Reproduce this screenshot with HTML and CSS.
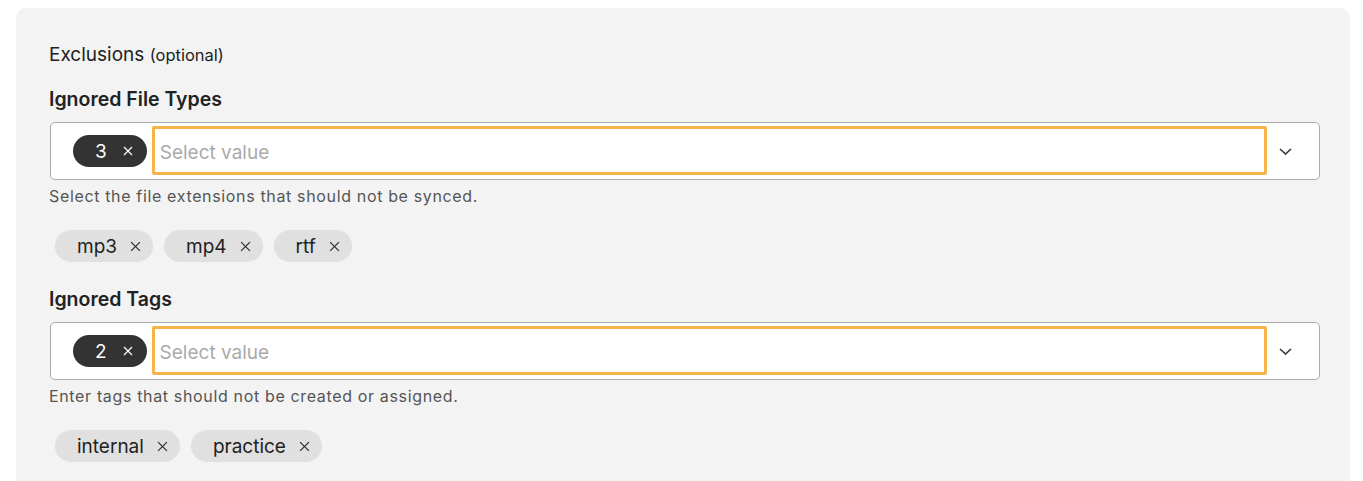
FILE: index.html
```html
<!DOCTYPE html>
<html lang="en">
<head>
<meta charset="utf-8">
<title>Exclusions</title>
<link rel="stylesheet" href="styles.css">
</head>
<body>
<section class="panel">
  <h2 class="title">Exclusions <span class="optional">(optional)</span></h2>

  <div class="field">
    <label class="field-label">Ignored File Types</label>
    <div class="select">
      <div class="select-values">
        <span class="count-chip">3 <svg class="x" viewBox="0 0 10 10"><path d="M1 1L9 9M9 1L1 9"/></svg></span>
        <input class="select-input" type="text" placeholder="Select value">
      </div>
      <span class="select-toggle"><svg class="chevron" viewBox="0 0 13 7"><path d="M1 1L6.5 6L12 1"/></svg></span>
    </div>
    <p class="help">Select the file extensions that should not be synced.</p>
    <div class="chips">
      <span class="chip">mp3 <svg class="x" viewBox="0 0 10 10"><path d="M1 1L9 9M9 1L1 9"/></svg></span>
      <span class="chip">mp4 <svg class="x" viewBox="0 0 10 10"><path d="M1 1L9 9M9 1L1 9"/></svg></span>
      <span class="chip">rtf <svg class="x" viewBox="0 0 10 10"><path d="M1 1L9 9M9 1L1 9"/></svg></span>
    </div>
  </div>

  <div class="field">
    <label class="field-label">Ignored Tags</label>
    <div class="select">
      <div class="select-values">
        <span class="count-chip">2 <svg class="x" viewBox="0 0 10 10"><path d="M1 1L9 9M9 1L1 9"/></svg></span>
        <input class="select-input" type="text" placeholder="Select value">
      </div>
      <span class="select-toggle"><svg class="chevron" viewBox="0 0 13 7"><path d="M1 1L6.5 6L12 1"/></svg></span>
    </div>
    <p class="help">Enter tags that should not be created or assigned.</p>
    <div class="chips">
      <span class="chip">internal <svg class="x" viewBox="0 0 10 10"><path d="M1 1L9 9M9 1L1 9"/></svg></span>
      <span class="chip">practice <svg class="x" viewBox="0 0 10 10"><path d="M1 1L9 9M9 1L1 9"/></svg></span>
    </div>
  </div>
</section>
</body>
</html>
```

FILE: styles.css
```css
* { box-sizing: border-box; }

html, body {
  margin: 0;
  padding: 0;
  background: #ffffff;
  font-family: Inter, "Liberation Sans", sans-serif;
  color: #222222;
}

body {
  padding: 8px 13px 0 16px;
  height: 481px;
  overflow: hidden;
}

.panel {
  background: #f3f3f3;
  border-radius: 10px 10px 0 0;
  padding: 35px 30px 40px 33px;
  min-height: 480px;
}

.title {
  margin: 0;
  font-size: 19px;
  font-weight: 400;
  line-height: 24px;
  color: #222;
}

.optional {
  font-size: 16.5px;
}

.field {
  margin-top: 20px;
}

.field + .field {
  margin-top: 25px;
}

.field-label {
  display: block;
  font-size: 19.5px;
  font-weight: 600;
  line-height: 24px;
  color: #222;
}

.select {
  margin-top: 11px;
  margin-left: 1px;
  height: 58px;
  border: 1px solid #a9a9a9;
  border-radius: 5px;
  background: #ffffff;
  display: flex;
  align-items: stretch;
}

.select-values {
  flex: 1;
  display: flex;
  align-items: center;
  gap: 5px;
  padding: 3px 0 4px 22px;
}

.count-chip {
  display: inline-flex;
  align-items: center;
  gap: 16px;
  height: 32px;
  padding: 2px 14px 0 22px;
  border-radius: 16px;
  background: #333333;
  color: #ffffff;
  font-size: 19px;
}

.count-chip .x {
  stroke: #ffffff;
  width: 10px;
  height: 10px;
  margin-top: -2px;
}

.select-input {
  flex: 1;
  height: 100%;
  border: 3px solid #f5b54b;
  border-radius: 2px;
  padding: 4px 0 0 5px;
  font-family: inherit;
  font-size: 19px;
  color: #222;
  background: #fff;
  outline: none;
}

.select-input::placeholder {
  color: #aaaaaa;
}

.select-toggle {
  width: 52px;
  display: flex;
  align-items: center;
  padding-left: 12px;
}

.chevron {
  width: 13px;
  height: 7px;
  fill: none;
  stroke: #333;
  stroke-width: 1.6;
}

.x {
  width: 11px;
  height: 11px;
  fill: none;
  stroke: #333;
  stroke-width: 1.2;
}

.help {
  margin: 6px 0 0;
  font-size: 16px;
  line-height: 20px;
  letter-spacing: 0.65px;
  color: #555555;
}

.chips {
  margin-top: 24px;
  display: flex;
  gap: 11px;
  padding-left: 6px;
}

.chip {
  display: inline-flex;
  align-items: center;
  gap: 13px;
  height: 32px;
  padding: 0 12px 0 22px;
  border-radius: 16px;
  background: #e0e0e0;
  color: #222;
  font-size: 19px;
}
```
